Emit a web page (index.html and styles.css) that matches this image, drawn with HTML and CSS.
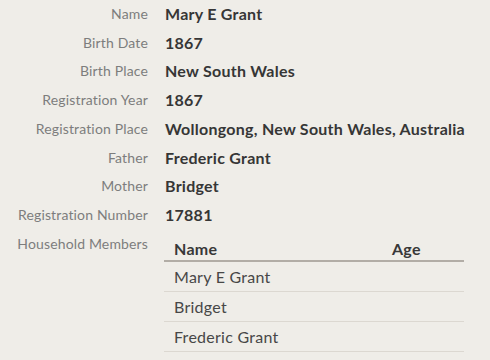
FILE: index.html
```html
<!DOCTYPE html>
<html lang="en">
<head>
<meta charset="utf-8">
<title>Record</title>
<link rel="stylesheet" href="styles.css">
</head>
<body>
<dl class="record">
  <dt class="label">Name</dt><dd class="value">Mary E Grant</dd>
  <dt class="label">Birth Date</dt><dd class="value">1867</dd>
  <dt class="label">Birth Place</dt><dd class="value">New South Wales</dd>
  <dt class="label">Registration Year</dt><dd class="value">1867</dd>
  <dt class="label">Registration Place</dt><dd class="value">Wollongong, New South Wales, Australia</dd>
  <dt class="label">Father</dt><dd class="value">Frederic Grant</dd>
  <dt class="label">Mother</dt><dd class="value">Bridget</dd>
  <dt class="label">Registration Number</dt><dd class="value">17881</dd>
  <dt class="label">Household Members</dt>
  <dd class="value table-cell">
    <table class="members">
      <colgroup><col class="col-name"><col class="col-age"></colgroup>
      <thead>
        <tr><th>Name</th><th>Age</th></tr>
      </thead>
      <tbody>
        <tr><td>Mary E Grant</td><td></td></tr>
        <tr><td>Bridget</td><td></td></tr>
        <tr><td>Frederic Grant</td><td></td></tr>
      </tbody>
    </table>
  </dd>
</dl>
</body>
</html>
```

FILE: styles.css
```css
html, body {
  margin: 0;
  padding: 0;
  background: #efede8;
}
body {
  font-family: "Lato", "Open Sans", sans-serif;
}
.record {
  margin: 0;
  display: grid;
  grid-template-columns: 148px 1fr;
  column-gap: 17px;
  align-items: start;
}
.label {
  margin: 0;
  text-align: right;
  font-size: 14px;
  letter-spacing: 0.15px;
  line-height: 28.7px;
  color: #7d7d7d;
  white-space: nowrap;
}
.value {
  margin: 0;
  font-size: 16px;
  font-weight: 700;
  letter-spacing: 0.26px;
  line-height: 28.7px;
  color: #363636;
  white-space: nowrap;
}
.members {
  border-collapse: collapse;
  table-layout: fixed;
  width: 300px;
  margin-left: -1px;
}
.col-name { width: 218px; }
.col-age { width: 82px; }
.members th {
  text-align: left;
  font-weight: 700;
  font-size: 16px;
  color: #383838;
  padding: 9.5px 9px 1.5px 10px;
  line-height: 19px;
  border-bottom: 2px solid #b2ada6;
}
.members td {
  font-weight: 400;
  font-size: 16px;
  color: #474747;
  padding: 1px 9px 0 10px;
  line-height: 28px;
  border-bottom: 1px solid #dcd8d1;
}
```
